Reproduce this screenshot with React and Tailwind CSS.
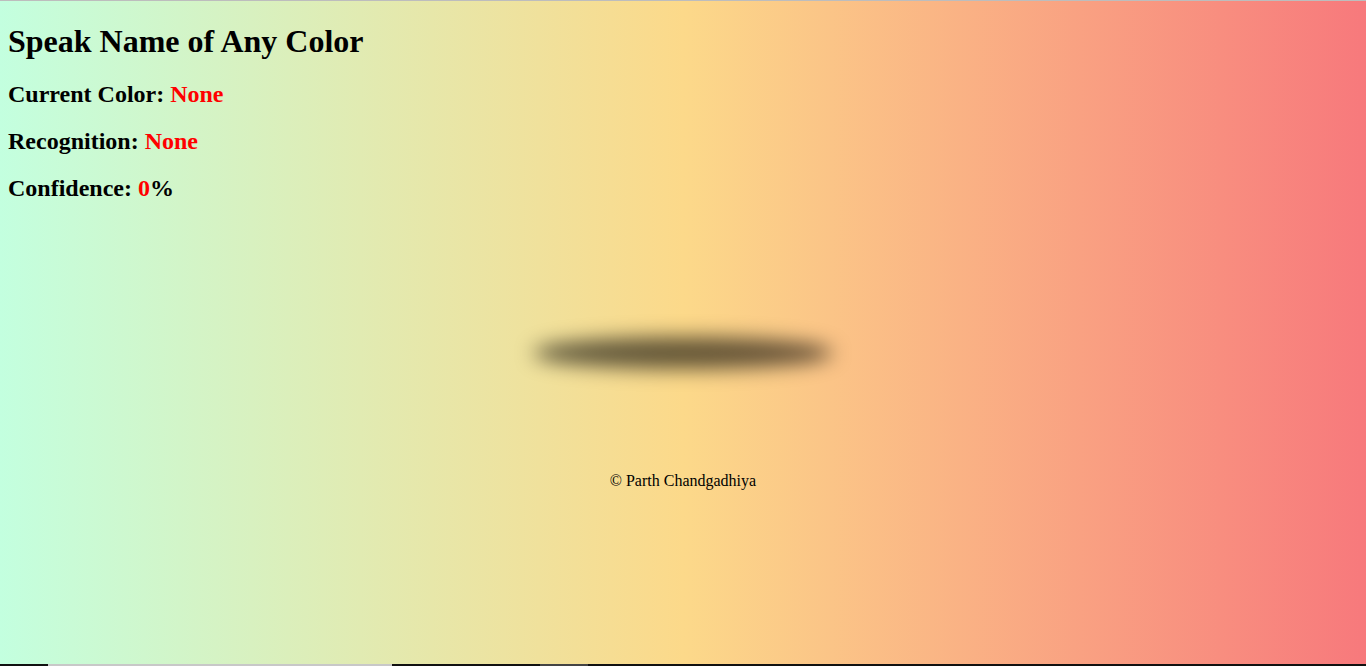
const App = () => {
  const serif = { fontFamily: '"Liberation Serif", "Times New Roman", serif' }

  return (
    <div
      className="h-[666px] flex flex-col overflow-hidden border-t border-[#bdbdbd] bg-[linear-gradient(to_right,#c3ffdf,#fcd98a_50%,#f7797c)] text-black"
      style={serif}
    >
      <div className="flex-1 px-2">
        {/* Heading + stats */}
        <h1 className="text-[32px] leading-[37px] font-bold mt-[22px] mb-[20px]">Speak Name of Any Color</h1>
        <h2 className="text-[24px] leading-[28px] font-bold mb-[19px]">
          Current Color: <span className="text-[#ff0000]">None</span>
        </h2>
        <h2 className="text-[24px] leading-[28px] font-bold mb-[19px]">
          Recognition: <span className="text-[#ff0000]">None</span>
        </h2>
        <h2 className="text-[24px] leading-[28px] font-bold">
          Confidence: <span className="text-[#ff0000]">0</span>%
        </h2>

        {/* Shadow blob */}
        <div className="flex justify-center mt-[135px]">
          <div className="w-[300px] h-[32px] rounded-[50%] bg-[#000000]/60 blur-[10px]" />
        </div>

        {/* Footer */}
        <p className="text-center text-[16px] mt-[100px]">© Parth Chandgadhiya</p>
      </div>

      {/* Bottom strip */}
      <div className="flex h-[2px] shrink-0 bg-[#111111]">
        <div className="w-[48px]" />
        <div className="w-[344px] bg-[#c8c8c8]" />
        <div className="w-[148px]" />
        <div className="w-[48px] bg-[#444444]" />
      </div>
    </div>
  )
}

export default App
